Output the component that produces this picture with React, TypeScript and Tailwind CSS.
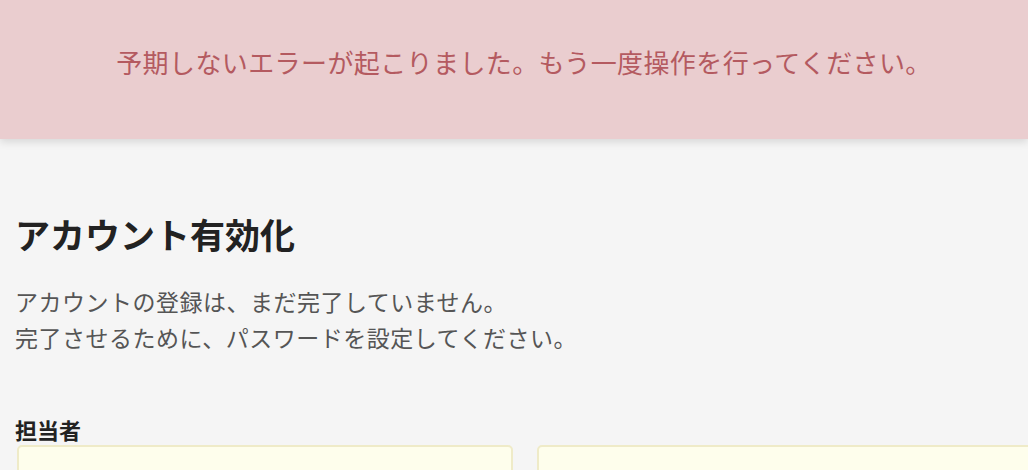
import React from "react";

export default function App() {
  return (
    <div
      className="w-[1028px] h-[470px] overflow-hidden bg-[#f5f5f5]"
      style={{ fontFamily: '"Noto Sans CJK JP", "Noto Sans", sans-serif' }}
    >
      <div className="relative h-[139px] bg-[#eacdcf] flex items-start justify-center pt-[44px] pl-[20px] shadow-[0_3px_8px_rgba(0,0,0,0.12)]">
        <p className="text-[26px] leading-[36px] tracking-[0.4px] text-[#b45a60]">
          予期しないエラーが起こりました。もう一度操作を行ってください。
        </p>
      </div>
      <div className="px-[15px] pt-[74px]">
        <h1 className="text-[35px] leading-[42px] font-bold text-[#222]">アカウント有効化</h1>
        <div className="mt-[28px] text-[23px] leading-[36px] tracking-[0.5px] text-[#555]">
          <p>アカウントの登録は、まだ完了していません。</p>
          <p>完了させるために、パスワードを設定してください。</p>
        </div>
        <div className="mt-[62px] text-[22px] leading-[24px] font-bold text-[#222]">担当者</div>
        <div className="mt-[4px] ml-[2px] flex gap-[24px]">
          <div className="w-[496px] h-[40px] shrink-0 rounded-[5px] border-2 border-[#efebc8] bg-[#fefeec]" />
          <div className="w-[496px] h-[40px] shrink-0 rounded-[5px] border-2 border-[#efebc8] bg-[#fefeec]" />
        </div>
      </div>
    </div>
  );
}
